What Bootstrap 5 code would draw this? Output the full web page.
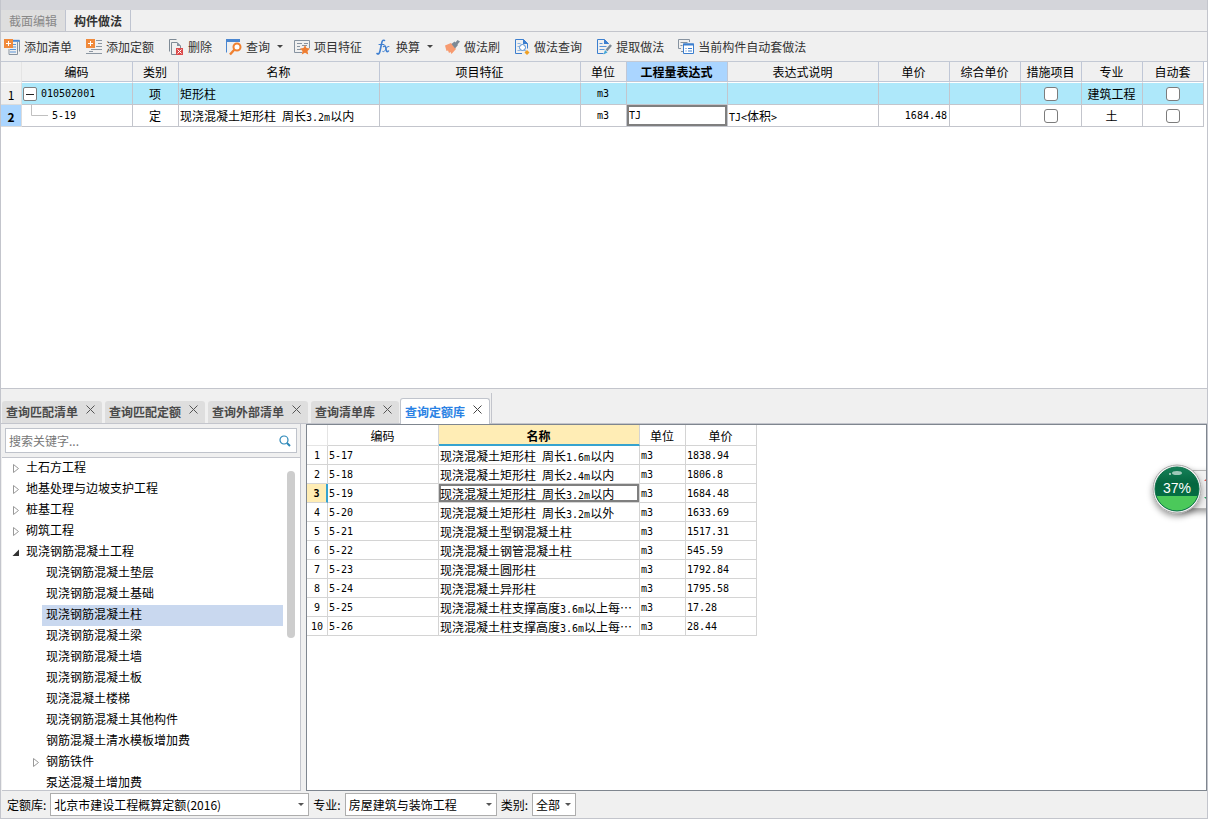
<!DOCTYPE html>
<html lang="zh-CN">
<head>
<meta charset="utf-8">
<meta name="viewport" content="width=device-width, initial-scale=1">
<title>构件做法</title>
<link href="https://cdn.jsdelivr.net/npm/bootstrap@5.3.0/dist/css/bootstrap.min.css" rel="stylesheet">
<style>
  :root { --line: #c3c5cc; --chrome: #f0f0f0; }
  body { font: 12px/18px "Noto Sans CJK SC", sans-serif; color: #000; background: var(--chrome); }
  button, input, select { font: inherit; color: inherit; }
  .strip { height: 10px; background: #d4d5da; }
  .app { border-left: 1px solid var(--line); border-right: 1px solid var(--line); }
  .num { font-family: "DejaVu Sans Mono", "Noto Sans CJK SC", monospace; font-size: 10px; }
  span.num { line-height: 1; }

  .page-tabs { border-bottom: 1px solid var(--line); height: 22px; }
  .page-tabs button { border: 0; border-right: 1px solid #bfc4d0; padding: 0 8px; background: var(--chrome); color: #333; font-weight: 700; }
  .page-tabs .idle { background: #dedede; color: #888; font-weight: 400; }

  .tools { height: 29px; padding-left: 3px; }
  .tools button { border: 0; background: none; padding: 0 14px 0 0; gap: 4px; color: #333; }
  .tools .menu { padding-right: 11px; }
  .tools svg { width: 16px; height: 16px; overflow: visible; }
  .tools .arrow { width: 6px; height: 3px; margin-left: 3px; }

  .upper { flex: 326 1 0; min-height: 0; border-top: 1px solid #c3c9d4; border-bottom: 1px solid var(--line); background: #fff; }
  .lower { flex: 367 1 0; min-height: 0; }

  .sheet { table-layout: fixed; width: 0; border-collapse: separate; border-spacing: 0; white-space: nowrap; }
  .sheet th, .sheet td { padding: 0 2px 0 1px; overflow: hidden; height: 22px; line-height: 18px; border: solid var(--line); border-width: 0 1px 1px 0; font-weight: 400; vertical-align: middle; }
  .sheet thead th { text-align: center; height: 20px; background: var(--chrome); border-color: #c0c7d6; }
  .sheet thead th:first-child { border-color: #e4e4e4; }
  .sheet tbody th { text-align: center; background: var(--chrome); border-color: #dcdcdc; padding: 2px 0 0 0; }
  .work tbody tr:first-child > * { border-top: 1px solid #fff; height: 23px; }
  .work .parent td { background: #aee8fa; }
  .work thead .hot, .work tbody .hot { background: #aad5ff; font-weight: 700; }
  .work td.cur { padding: 0; }
  .work td.cur input { display: block; width: 100%; height: 21px; border: 2px solid #7f7f7f; outline: 0; padding: 0; background: #fff; }
  .sheet input[type=checkbox] { appearance: none; display: block; width: 14px; height: 14px; margin: 0 auto; border: 1px solid #7c7c7c; border-radius: 3px; background: #fff; }
  .fold { width: 14px; height: 14px; border: 1px solid #808080; border-radius: 2px; background: #fff; padding: 0; }
  .fold svg, .twig svg { display: block; }

  .sheet.lib th, .sheet.lib td { height: 19px; line-height: 16px; border-color: #d4d4d4; }
  .sheet.lib td, .sheet.lib tbody th { padding-top: 2px; }
  .sheet.lib thead th { background: #fff; height: 21px; padding-top: 2px; }
  .sheet.lib tbody th { background: #fff; padding: 2px 0 0; }
  .sheet.lib thead .hot { background: #ffedb5; font-weight: 700; border-bottom: 2px solid #36a3cf; }
  .sheet.lib tbody .hot { background: #ffedb5; font-weight: 700; border-right: 2px solid #36a3cf; }
  .lib .cur { box-shadow: inset 0 0 0 2px #7f7f7f; }

  .dock-tabs { height: 35px; border-bottom: 1px solid var(--line); padding-left: 1px; }
  .dock-tab { height: 22px; padding: 0 7px 0 4px; margin-right: 3px; gap: 8px; background: #dedede; border-radius: 3px 3px 0 0; font-weight: 700; color: #4a4a4a; }
  .dock-tab button { border: 0; background: none; padding: 0; }
  .dock-tab svg { display: block; width: 9px; height: 9px; margin-bottom: 5px; }
  .dock-tab.on { height: 26px; margin: 0 1px -1px -2px; background: #fff; border: 1px solid #c0c4cc; border-bottom: 0; color: #2a82e4; }
  .dock-end { width: 1px; height: 30px; background: var(--line); }

  .side { width: 299px; border-right: 1px solid var(--line); border-bottom: 1px solid var(--line); margin-left: 1px; }
  .find { height: 25px; margin: 4px 3px; border: 1px solid #bfc3cb; background: #fff; }
  .find input { border: 0; outline: 0; padding: 0 3px; min-width: 0; background: none; }
  .find input::placeholder { color: #777; opacity: 1; }
  .find button { border: 0; background: none; padding: 0 5px 0 0; }
  .tree { border-top: 1px solid var(--line); background: #fff; min-height: 0; }
  .node { height: 21px; padding: 0 0 4px 10px; gap: 5px; }
  .kid { height: 21px; line-height: 17px; margin: 0 17px 0 40px; padding-left: 4px; }
  .kid.on { background: #c9d8ef; }
  .kid.branch { margin-left: 20px; padding: 0 0 4px 10px; gap: 5px; }
  .twig { width: 9px; height: 9px; padding: 0; border: 0; background: none; margin-top: 4px; }
  .thumb { width: 8px; height: 167px; right: 5px; top: 13px; border-radius: 4px; background: #cdcdcd; }
  .result { margin-left: 5px; border: 1px solid #7f868f; background: #fff; }

  .filters { height: 28px; padding-left: 6px; border-bottom: 1px solid var(--line); }
  .filters select { appearance: none; height: 23px; border: 1px solid #adadad; border-radius: 0; padding: 0 12px 0 3px; margin: 0 4px; outline: 0;
    background: #fff url("data:image/svg+xml,%3Csvg xmlns='http://www.w3.org/2000/svg' width='6' height='3'%3E%3Cpath d='M0 0h6L3 3z' fill='%23555'/%3E%3C/svg%3E") no-repeat right 4px center; }
  .w-lib { width: 259px; } .w-major { width: 152px; } .w-kind { width: 44px; }

  .gauge { right: 0; top: 36px; width: 54px; height: 56px; }
</style>
</head>
<body>
<div class="app d-flex flex-column vh-100 overflow-hidden">
  <div class="strip flex-shrink-0"></div>
  <nav class="page-tabs d-flex flex-shrink-0">
    <button type="button" class="idle">截面编辑</button>
    <button type="button">构件做法</button>
  </nav>

  <div class="tools d-flex align-items-center flex-shrink-0">
    <button type="button" class="d-flex align-items-center">
      <svg viewBox="0 0 16 16" fill="none"><path d="M11 1.500h4.500v11M13.500 3v12.500H5V10" stroke="#8793a0"/><path d="M9 1.800h6.500" stroke="#4a86d0" stroke-width="2"/><path d="M9 5.500h3M9 8h3M6 10.500h6M6 13h6" stroke="#5b95d8"/><path d="M0 0h9v9H0z" fill="#f08a3c"/><path d="M4.500 2v5M2 4.500h5" stroke="#fff"/></svg>添加清单</button>
    <button type="button" class="d-flex align-items-center">
      <svg viewBox="0 0 16 16" fill="none"><path d="M10 1.500h6M12 4.500h4M10 7.500h6M5 10.500h11M0 14.500h16M3 12.500h4" stroke="#8c97a2"/><path d="M0 0h9v9H0z" fill="#f08a3c"/><path d="M4.500 2v5M2 4.500h5" stroke="#fff"/></svg>添加定额</button>
    <button type="button" class="d-flex align-items-center">
      <svg viewBox="0 0 16 16" fill="none"><path d="M1.500 12.500V.5h7M8 15.500H3.500v-12h5.500l3.500 3.500v2" stroke="#7f8b96"/><path d="M9 3v4h4z" fill="#8793a0"/><path d="M8 9h7v7H8z" fill="#dc4b4b"/><path d="m9.500 10.500 4 4m0-4-4 4" stroke="#fff"/></svg>删除</button>
    <button type="button" class="menu d-flex align-items-center">
      <svg viewBox="0 0 16 16" fill="none"><path d="M.5 13.500V1.500h13" stroke="#4a86d0"/><path d="M0 1.500h14" stroke="#4a86d0" stroke-width="3"/><circle cx="11" cy="8" r="3.500" stroke="#f08030" stroke-width="2" fill="#fff"/><path d="m8.500 10.500-4.500 5" stroke="#f08030" stroke-width="2.400"/></svg>查询
      <svg class="arrow" viewBox="0 0 6 3"><path d="M0 0h6L3 3z" fill="#444"/></svg></button>
    <button type="button" class="d-flex align-items-center">
      <svg viewBox="0 0 16 16" fill="none"><path d="M8 13.500H.5v-12h15V9" stroke="#8793a0"/><path d="M3 4.500h5M3 7.500h3M3 10.500h4M10 4.500h4M8 6.500h5" stroke="#8793a0"/><path d="m11 6 1.500 3 3.500.5-2.500 2.500.7 3.500-3.200-1.700L7.800 15.500l.7-3.500L6 9.500 9.500 9z" fill="#ee7d31"/></svg>项目特征</button>
    <button type="button" class="menu d-flex align-items-center">
      <svg viewBox="0 0 16 16" fill="none" stroke="#3f7fd0" stroke-linecap="round"><path d="M8.500 1.500C6.500.5 6 2.500 5.500 5l-1.500 7c-.5 2.500-1.500 3.500-3 2.500" stroke-width="1.600"/><path d="M3 5.500h5"/><path d="M7.500 7.500c2-1.500 2 0 2.500 2.500s.7 3.500 2.500 2" stroke-width="1.500"/><path d="M13 7.500c-1.500-.5-2.500 1-3.500 3s-1.500 2.500-2.700 2"/></svg>换算
      <svg class="arrow" viewBox="0 0 6 3"><path d="M0 0h6L3 3z" fill="#444"/></svg></button>
    <button type="button" class="d-flex align-items-center">
      <svg viewBox="0 0 16 16"><path d="M1 6.500 7 4l5 6-4.500 5-1-2-1.500 1-1-2.500-1.500.5z" fill="#f79b70"/><path d="m7.500 5 3-2.500L14 6l-3 3.500z" fill="#7c8995"/><path d="m11 4 2.500-3L16 2.500 13 6z" fill="#7c8995"/></svg>做法刷</button>
    <button type="button" class="d-flex align-items-center">
      <svg viewBox="0 0 16 16" fill="none"><path d="M8 14.500H1.500V.5h8l4 4v5" stroke="#3c7fcf"/><path d="M9 0v5h5z" fill="#3c7fcf"/><path d="M3.500 4.500h3M3.500 7.500h2M3.500 11.500h3" stroke="#8bb4e2"/><circle cx="8.500" cy="8.500" r="3" stroke="#4c8ad2" fill="#fff"/><path d="m10.500 11 1.500 1.500" stroke="#4c8ad2"/><path d="m13 11 2.500 2.500L13 16l-2.500-2.500z" fill="#f0a022"/></svg>做法查询</button>
    <button type="button" class="d-flex align-items-center">
      <svg viewBox="0 0 16 16" fill="none"><path d="M12.500 5v-.5l-4-4h-7v14h6" stroke="#3c7fcf"/><path d="M8 0v5h5z" fill="#3c7fcf"/><path d="M3.500 4.500h3M3.500 7.500h7M3.500 10.500h5" stroke="#5b95d8"/><path d="m15 6-4.500 5.500" stroke="#7c8995" stroke-width="2.500"/><path d="m9 11-1.500 4.500 4-2z" fill="#43a7d8"/></svg>提取做法</button>
    <button type="button" class="d-flex align-items-center">
      <svg viewBox="0 0 16 16" fill="none"><path d="M3 9.500H.5v-9h11V3M2.500 3.500h7M2.500 6.500h2M3 12.500h2" stroke="#8793a0"/><path d="M5.500 5h10v9.500h-10z" stroke="#3c7fcf" fill="#fff"/><path d="M5 5.500h11" stroke="#3c7fcf" stroke-width="2"/><path d="M7.500 9.500h1M10 9.500h4M7.500 12h1M10 12h4" stroke="#3c7fcf"/></svg>当前构件自动套做法</button>
  </div>

  <section class="upper overflow-auto">
    <table class="sheet work">
      <colgroup><col style="width:21px"><col style="width:111px"><col style="width:46px"><col style="width:201px"><col style="width:201px"><col style="width:46px"><col style="width:101px"><col style="width:151px"><col style="width:71px"><col style="width:71px"><col style="width:61px"><col style="width:61px"><col style="width:61px"></colgroup>
      <thead><tr><th></th><th>编码</th><th>类别</th><th>名称</th><th>项目特征</th><th>单位</th><th class="hot">工程量表达式</th><th>表达式说明</th><th>单价</th><th>综合单价</th><th>措施项目</th><th>专业</th><th>自动套</th></tr></thead>
      <tbody>
        <tr class="parent"><th>1</th>
          <td><div class="d-flex align-items-center"><button type="button" class="fold me-1" aria-label="折叠"><svg width="12" height="12"><path d="M2 6.500h8" stroke="#222"/></svg></button><span class="num">010502001</span></div></td>
          <td class="text-center">项</td><td>矩形柱</td><td></td><td class="text-center num">m3</td><td></td><td></td><td></td><td></td>
          <td><input type="checkbox" aria-label="措施项目 1"></td><td class="text-center">建筑工程</td><td><input type="checkbox" aria-label="自动套 1"></td></tr>
        <tr><th class="hot">2</th>
          <td><div class="d-flex align-items-center"><svg class="ms-2" width="17" height="21" fill="none"><path d="M.5 0v10.500H17" stroke="#c0c0c0"/></svg><span class="num ps-1">5-19</span></div></td>
          <td class="text-center">定</td><td>现浇混凝土矩形柱<span class="num"> </span>周长<span class="num">3.2m</span>以内</td><td></td><td class="text-center num">m3</td>
          <td class="cur"><input type="text" class="num" value="TJ" aria-label="工程量表达式"></td>
          <td><span class="num">TJ&lt;</span>体积<span class="num">&gt;</span></td><td class="text-end num">1684.48</td><td></td>
          <td><input type="checkbox" aria-label="措施项目 2"></td><td class="text-center">土</td><td><input type="checkbox" aria-label="自动套 2"></td></tr>
      </tbody>
    </table>
  </section>

  <nav class="dock-tabs d-flex align-items-end flex-shrink-0">
    <div class="dock-tab d-flex align-items-center">查询匹配清单<button type="button" aria-label="关闭"><svg viewBox="0 0 9 9"><path d="m.5.5 8 8m0-8-8 8" stroke="#555"/></svg></button></div>
    <div class="dock-tab d-flex align-items-center">查询匹配定额<button type="button" aria-label="关闭"><svg viewBox="0 0 9 9"><path d="m.5.5 8 8m0-8-8 8" stroke="#555"/></svg></button></div>
    <div class="dock-tab d-flex align-items-center">查询外部清单<button type="button" aria-label="关闭"><svg viewBox="0 0 9 9"><path d="m.5.5 8 8m0-8-8 8" stroke="#555"/></svg></button></div>
    <div class="dock-tab d-flex align-items-center">查询清单库<button type="button" aria-label="关闭"><svg viewBox="0 0 9 9"><path d="m.5.5 8 8m0-8-8 8" stroke="#555"/></svg></button></div>
    <div class="dock-tab on d-flex align-items-center">查询定额库<button type="button" aria-label="关闭"><svg viewBox="0 0 9 9"><path d="m.5.5 8 8m0-8-8 8" stroke="#444"/></svg></button></div>
    <div class="dock-end"></div>
  </nav>

  <div class="lower d-flex">
    <aside class="side d-flex flex-column flex-shrink-0">
      <div class="find d-flex align-items-center flex-shrink-0">
        <input type="text" class="flex-grow-1" placeholder="搜索关键字..." aria-label="搜索关键字">
        <button type="button" aria-label="搜索"><svg class="d-block" width="12" height="12" fill="none" stroke="#2b87b8"><circle cx="5" cy="5" r="4" stroke-width="1.200"/><path d="m8 8 3 3" stroke-width="2"/></svg></button>
      </div>
      <div class="tree flex-grow-1 position-relative overflow-hidden">
        <ul class="list-unstyled m-0">
          <li class="node d-flex align-items-center"><button type="button" class="twig" aria-label="展开"><svg width="9" height="9"><path d="M1.500.5v8l5-4z" fill="#fff" stroke="#999"/></svg></button>土石方工程</li>
          <li class="node d-flex align-items-center"><button type="button" class="twig" aria-label="展开"><svg width="9" height="9"><path d="M1.500.5v8l5-4z" fill="#fff" stroke="#999"/></svg></button>地基处理与边坡支护工程</li>
          <li class="node d-flex align-items-center"><button type="button" class="twig" aria-label="展开"><svg width="9" height="9"><path d="M1.500.5v8l5-4z" fill="#fff" stroke="#999"/></svg></button>桩基工程</li>
          <li class="node d-flex align-items-center"><button type="button" class="twig" aria-label="展开"><svg width="9" height="9"><path d="M1.500.5v8l5-4z" fill="#fff" stroke="#999"/></svg></button>砌筑工程</li>
          <li><div class="node d-flex align-items-center"><button type="button" class="twig" aria-label="折叠"><svg width="9" height="9"><path d="M7 1.500V8H.5z" fill="#333"/></svg></button>现浇钢筋混凝土工程</div>
            <ul class="list-unstyled m-0">
              <li class="kid">现浇钢筋混凝土垫层</li>
              <li class="kid">现浇钢筋混凝土基础</li>
              <li class="kid on">现浇钢筋混凝土柱</li>
              <li class="kid">现浇钢筋混凝土梁</li>
              <li class="kid">现浇钢筋混凝土墙</li>
              <li class="kid">现浇钢筋混凝土板</li>
              <li class="kid">现浇混凝土楼梯</li>
              <li class="kid">现浇钢筋混凝土其他构件</li>
              <li class="kid">钢筋混凝土清水模板增加费</li>
              <li class="kid branch d-flex align-items-center"><button type="button" class="twig" aria-label="展开"><svg width="9" height="9"><path d="M1.500.5v8l5-4z" fill="#fff" stroke="#999"/></svg></button>钢筋铁件</li>
              <li class="kid">泵送混凝土增加费</li>
            </ul></li>
        </ul>
        <div class="thumb position-absolute"></div>
      </div>
    </aside>

    <section class="result flex-grow-1 position-relative overflow-hidden">
      <table class="sheet lib">
        <colgroup><col style="width:21px"><col style="width:111px"><col style="width:201px"><col style="width:46px"><col style="width:71px"></colgroup>
        <thead><tr><th></th><th>编码</th><th class="hot">名称</th><th>单位</th><th>单价</th></tr></thead>
        <tbody>
          <tr><th class="num">1</th><td class="num">5-17</td><td>现浇混凝土矩形柱<span class="num"> </span>周长<span class="num">1.6m</span>以内</td><td class="num">m3</td><td class="num">1838.94</td></tr>
          <tr><th class="num">2</th><td class="num">5-18</td><td>现浇混凝土矩形柱<span class="num"> </span>周长<span class="num">2.4m</span>以内</td><td class="num">m3</td><td class="num">1806.8</td></tr>
          <tr><th class="num hot">3</th><td class="num">5-19</td><td class="cur">现浇混凝土矩形柱<span class="num"> </span>周长<span class="num">3.2m</span>以内</td><td class="num">m3</td><td class="num">1684.48</td></tr>
          <tr><th class="num">4</th><td class="num">5-20</td><td>现浇混凝土矩形柱<span class="num"> </span>周长<span class="num">3.2m</span>以外</td><td class="num">m3</td><td class="num">1633.69</td></tr>
          <tr><th class="num">5</th><td class="num">5-21</td><td>现浇混凝土型钢混凝土柱</td><td class="num">m3</td><td class="num">1517.31</td></tr>
          <tr><th class="num">6</th><td class="num">5-22</td><td>现浇混凝土钢管混凝土柱</td><td class="num">m3</td><td class="num">545.59</td></tr>
          <tr><th class="num">7</th><td class="num">5-23</td><td>现浇混凝土圆形柱</td><td class="num">m3</td><td class="num">1792.84</td></tr>
          <tr><th class="num">8</th><td class="num">5-24</td><td>现浇混凝土异形柱</td><td class="num">m3</td><td class="num">1795.58</td></tr>
          <tr><th class="num">9</th><td class="num">5-25</td><td>现浇混凝土柱支撑高度<span class="num">3.6m</span>以上每…</td><td class="num">m3</td><td class="num">17.28</td></tr>
          <tr><th class="num">10</th><td class="num">5-26</td><td>现浇混凝土柱支撑高度<span class="num">3.6m</span>以上每…</td><td class="num">m3</td><td class="num">28.44</td></tr>
        </tbody>
      </table>
      <svg class="gauge position-absolute" viewBox="0 0 54 56" overflow="visible">
        <defs>
          <linearGradient id="deep" x2="0" y2="1"><stop offset="0" stop-color="#1c8a62"/><stop offset=".4" stop-color="#04663f"/><stop offset="1" stop-color="#067a4a"/></linearGradient>
          <clipPath id="disc"><circle cx="25" cy="28" r="22"/></clipPath>
          <filter id="soft" x="-30%" y="-30%" width="160%" height="160%"><feDropShadow dx="0" dy="3" stdDeviation="3" flood-opacity=".4"/></filter>
        </defs>
        <path d="M26 9.500h34v38H26z" fill="#f2f2f2" stroke="#b5b5b5" filter="url(#soft)"/>
        <path d="m52 20 3-3v3z" fill="#e2574c"/><path d="m52 36 3 3v-3z" fill="#2fa866"/>
        <circle cx="25" cy="28" r="24" fill="#f4f4f4" stroke="#a8a8a8" filter="url(#soft)"/>
        <g clip-path="url(#disc)"><path d="M0 0h56v56H0z" fill="url(#deep)"/><path d="M0 35h56v21H0z" fill="#4bc95a"/><ellipse cx="25" cy="12" rx="5" ry="2" fill="#fff" opacity=".6"/><circle cx="18" cy="13" r="1" fill="#fff" opacity=".7"/></g>
        <circle cx="25" cy="28" r="22" fill="none" stroke="#0a7048"/>
        <text x="25" y="32" text-anchor="middle" font-family="Liberation Sans, sans-serif" font-size="14" fill="#fff">37%</text>
      </svg>
    </section>
  </div>

  <div class="filters d-flex align-items-center flex-shrink-0">
    <label for="lib">定额库:</label><select id="lib" class="w-lib"><option>北京市建设工程概算定额(2016)</option></select>
    <label for="major">专业:</label><select id="major" class="w-major"><option>房屋建筑与装饰工程</option></select>
    <label for="kind">类别:</label><select id="kind" class="w-kind"><option>全部</option></select>
  </div>
</div>
<script src="https://cdn.jsdelivr.net/npm/bootstrap@5.3.0/dist/js/bootstrap.bundle.min.js"></script>
</body>
</html>
